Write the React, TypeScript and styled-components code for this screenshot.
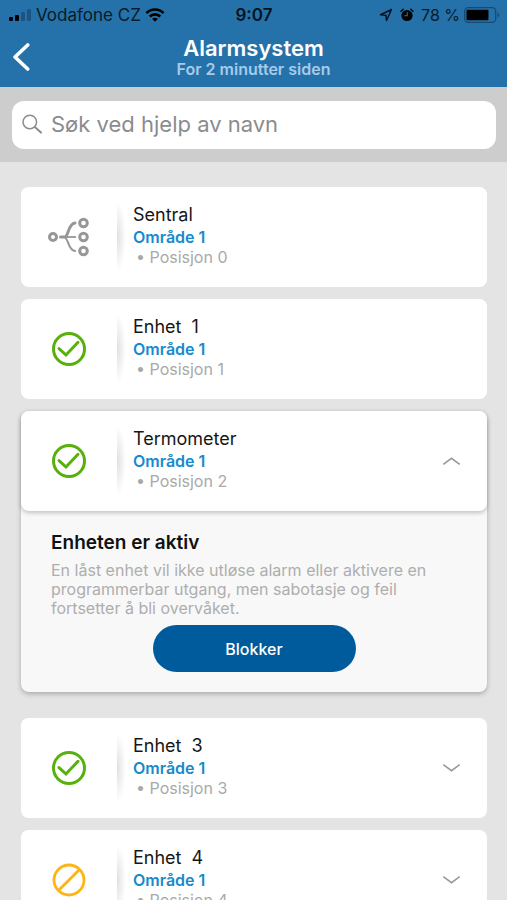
import React, { useState } from "react";
import styled, { createGlobalStyle } from "styled-components";

const GlobalStyle = createGlobalStyle`
  * { box-sizing: border-box; }
  body { margin: 0; background: #e4e4e4; font-family: Inter, "Liberation Sans", sans-serif; }
  button, input { font-family: inherit; }
  h1, h2, p, ul { margin: 0; padding: 0; }
`;

const Screen = styled.div`
  display: flex;
  flex-direction: column;
  height: 100vh;
  background: #e4e4e4;
`;

const Header = styled.header`
  flex: none;
  background: #2572aa;
`;

const StatusBar = styled.div`
  display: grid;
  grid-template-columns: 1fr auto 1fr;
  align-items: center;
  height: 30px;
  padding: 0 7px 0 8px;
  font-size: 17px;
  color: #0a1a28;
`;

const StatusGroup = styled.div<{ $end?: boolean }>`
  display: flex;
  align-items: center;
  justify-content: ${(p) => (p.$end ? "flex-end" : "flex-start")};
  gap: ${(p) => (p.$end ? "7px" : "4px")};
  white-space: nowrap;
`;

const BatteryLevel = styled.span`
  display: flex;
  align-items: center;
  gap: 4px;
  font-size: 16px;
`;

const Clock = styled.time`
  font-weight: 600;
  color: #06121d;
`;

const NavBar = styled.div`
  display: grid;
  grid-template-columns: 48px 1fr 48px;
  align-items: center;
  padding: 6px 0 9px;
`;

const BackButton = styled.button`
  display: flex;
  align-items: center;
  height: 42px;
  padding: 0 0 0 12px;
  border: 0;
  background: none;
  color: #fff;
`;

const Title = styled.h1`
  font-size: 22px;
  line-height: 24px;
  font-weight: 600;
  text-align: center;
  color: #fff;
`;

const Subtitle = styled.p`
  font-size: 16px;
  line-height: 18px;
  font-weight: 600;
  text-align: center;
  color: #a5cbea;
`;

const SearchArea = styled.div`
  flex: none;
  padding: 14px 11px 13px 12px;
  background: #cdcdcd;
`;

const SearchBox = styled.label`
  display: flex;
  align-items: center;
  gap: 8px;
  height: 48px;
  padding: 0 10px 2px;
  border-radius: 12px;
  background: #fff;
  color: #8b8b8e;
`;

const SearchInput = styled.input`
  flex: 1;
  min-width: 0;
  padding: 0;
  border: 0;
  outline: 0;
  background: none;
  font-size: 22px;
  color: #222;
  &::placeholder { color: #8b8b8e; opacity: 1; }
`;

const List = styled.ul`
  flex: 1;
  min-height: 0;
  display: flex;
  flex-direction: column;
  gap: 12px;
  padding: 25px 20px 12px 21px;
  overflow-y: auto;
  scrollbar-width: none;
  list-style: none;
`;

const Item = styled.li<{ $open: boolean }>`
  flex: none;
  margin-bottom: ${(p) => (p.$open ? "14px" : "0")};
  border-radius: 8px;
  background: #f8f8f8;
  box-shadow: ${(p) => (p.$open ? "0 2px 5px rgba(0, 0, 0, 0.25)" : "none")};
`;

const Row = styled.button<{ $open: boolean }>`
  display: grid;
  grid-template-columns: 96px 16px 1fr auto;
  align-items: center;
  width: 100%;
  height: 100px;
  padding: 0 26px 0 0;
  border: 0;
  border-radius: 8px;
  background: #fff;
  text-align: left;
  box-shadow: ${(p) => (p.$open ? "0 2px 4px rgba(0, 0, 0, 0.22)" : "none")};
`;

const IconCell = styled.span`
  display: flex;
  justify-content: center;
`;

const Divider = styled.span`
  height: 68px;
  background: radial-gradient(ellipse 9px 36px at left center, rgba(0, 0, 0, 0.12), rgba(0, 0, 0, 0));
`;

const Info = styled.span`
  display: flex;
  flex-direction: column;
  padding-bottom: 4px;
`;

const Name = styled.span`
  font-size: 18px;
  line-height: 24px;
  color: #161616;
  white-space: pre;
`;

const Area = styled.span`
  font-size: 16px;
  line-height: 20px;
  font-weight: 600;
  color: #168acb;
`;

const Position = styled.span`
  padding-left: 3px;
  font-size: 16px;
  line-height: 20px;
  color: #a9a9a9;
`;

const Panel = styled.div`
  display: flex;
  flex-direction: column;
  padding: 20px 30px;
`;

const PanelTitle = styled.h2`
  font-size: 19px;
  line-height: 24px;
  font-weight: 600;
  color: #111;
`;

const PanelText = styled.p`
  padding: 6px 0 7px;
  font-size: 16px;
  line-height: 19px;
  color: #aeaeae;
`;

const BlockButton = styled.button`
  align-self: center;
  width: 50%;
  min-width: 203px;
  height: 47px;
  border: 0;
  border-radius: 24px;
  background: #005b9c;
  font-size: 16px;
  font-weight: 500;
  color: #fff;
`;

const SignalIcon = () => (
  <svg width="24" height="12" viewBox="0 0 24 12" aria-hidden="true">
    <rect x="1" y="8" width="4" height="4" rx="1" fill="#000" />
    <rect x="7" y="6" width="4" height="6" rx="1" fill="#000" />
    <rect x="13" y="3" width="4" height="9" rx="1" fill="#1b5482" />
    <rect x="19" y="0" width="4" height="12" rx="1" fill="#1b5482" />
  </svg>
);

const WifiIcon = () => (
  <svg width="20" height="14" viewBox="0 0 20 14" fill="none" stroke="#000" strokeWidth="2.6" aria-hidden="true">
    <path d="M1.4 5.2C6.2.3 13.8.3 18.6 5.2" />
    <path d="M4.7 8.5C7.7 5.6 12.3 5.6 15.3 8.5" />
    <path d="M10 13.800L7.100 10.800C8.700 9.400 11.300 9.400 12.900 10.800Z" fill="#000" stroke="none" />
  </svg>
);

const LocationIcon = () => (
  <svg width="14" height="14" viewBox="0 0 14 14" fill="none" stroke="#06121d" strokeWidth="1.5" strokeLinejoin="round" aria-hidden="true">
    <path d="M12.500 1.500L1.500 6.700L7 7.200L7.500 12.500Z" />
  </svg>
);

const AlarmIcon = () => (
  <svg width="14" height="14" viewBox="0 0 14 14" fill="none" strokeLinecap="round" aria-hidden="true">
    <circle cx="7" cy="7.5" r="5.6" fill="#000" />
    <path d="M1 3.200L3.200 1.200M13 3.200L10.800 1.200" stroke="#000" strokeWidth="1.4" />
    <path d="M7.200 4.600V7.800H4.800" stroke="#2572aa" strokeWidth="1.1" />
  </svg>
);

const BatteryIcon = () => (
  <svg width="36" height="16" viewBox="0 0 36 16" aria-hidden="true">
    <rect x="0.7" y="0.7" width="31" height="14.6" rx="3.5" fill="none" stroke="#174a70" strokeWidth="1.3" />
    <rect x="2.5" y="2.8" width="22" height="10.4" rx="1" fill="#000" />
    <path d="M33.500 5.500C35.800 6 35.800 10 33.500 10.500Z" fill="#174a70" />
  </svg>
);

const BackIcon = () => (
  <svg width="18" height="30" viewBox="0 0 18 30" fill="none" stroke="currentColor" strokeWidth="3.6" strokeLinecap="round" strokeLinejoin="round" aria-hidden="true">
    <path d="M15.700 3L3 15L15.700 27" />
  </svg>
);

const SearchIcon = () => (
  <svg width="21" height="20" viewBox="0 0 21 20" fill="none" stroke="currentColor" strokeWidth="1.5" strokeLinecap="round" aria-hidden="true">
    <circle cx="7.8" cy="8" r="6.8" />
    <path d="M12.800 13L19 18.600" strokeWidth="2" />
  </svg>
);

const HubIcon = () => (
  <svg width="42" height="40" viewBox="0 0 42 40" fill="none" stroke="#979797" strokeWidth="3" aria-hidden="true">
    <circle cx="5" cy="20" r="3.5" />
    <circle cx="35.5" cy="6" r="3.8" />
    <circle cx="35.5" cy="20" r="3.8" />
    <circle cx="35.5" cy="34" r="3.8" />
    <path d="M12.500 20H17C21 18 20 7 27 6" strokeWidth="3" strokeLinecap="round" />
    <path d="M14 20H28" strokeWidth="1.8" />
    <path d="M17 20.500C21 23 20 33 27 34" strokeWidth="2" strokeLinecap="round" />
  </svg>
);

const ActiveIcon = () => (
  <svg width="36" height="36" viewBox="0 0 36 36" fill="none" stroke="#57b00c" strokeWidth="3" aria-hidden="true">
    <circle cx="18" cy="18" r="15.5" />
    <path d="M8 17.600L15 24L27 11.300" strokeLinecap="round" />
  </svg>
);

const BlockedIcon = () => (
  <svg width="36" height="36" viewBox="0 0 36 36" fill="none" stroke="#fdb515" strokeWidth="2.8" aria-hidden="true">
    <circle cx="18" cy="18" r="15" />
    <path d="M7.500 28.500L28.500 7.500" />
  </svg>
);

const Caret = ({ up }: { up: boolean }) => (
  <svg width="19" height="10" viewBox="0 0 19 10" fill="none" stroke="#999" strokeWidth="1.6" aria-hidden="true">
    <path d={up ? "M1.300 8.300L9.500 2.300L17.700 8.300" : "M1.300 1.700L9.500 7.700L17.700 1.700"} />
  </svg>
);

type Device = { name: string; position: number; status: "hub" | "active" | "blocked"; expandable?: boolean };

const devices: Device[] = [
  { name: "Sentral", position: 0, status: "hub" },
  { name: "Enhet  1", position: 1, status: "active" },
  { name: "Termometer", position: 2, status: "active", expandable: true },
  { name: "Enhet  3", position: 3, status: "active", expandable: true },
  { name: "Enhet  4", position: 4, status: "blocked", expandable: true },
];

const statusIcons = { hub: HubIcon, active: ActiveIcon, blocked: BlockedIcon };

export default function App() {
  const [openPosition, setOpenPosition] = useState<number | null>(2);
  const [query, setQuery] = useState("");
  const visible = devices.filter((d) => d.name.toLowerCase().includes(query.toLowerCase()));

  return (
    <Screen>
      <GlobalStyle />
      <Header>
        <StatusBar>
          <StatusGroup>
            <SignalIcon />
            <span>Vodafone CZ</span>
            <WifiIcon />
          </StatusGroup>
          <Clock>9:07</Clock>
          <StatusGroup $end>
            <LocationIcon />
            <AlarmIcon />
            <BatteryLevel>
              78 %
              <BatteryIcon />
            </BatteryLevel>
          </StatusGroup>
        </StatusBar>
        <NavBar>
          <BackButton aria-label="Tilbake">
            <BackIcon />
          </BackButton>
          <div>
            <Title>Alarmsystem</Title>
            <Subtitle>For 2 minutter siden</Subtitle>
          </div>
        </NavBar>
      </Header>
      <SearchArea>
        <SearchBox>
          <SearchIcon />
          <SearchInput
            type="text"
            aria-label="Søk ved hjelp av navn"
            placeholder="Søk ved hjelp av navn"
            value={query}
            onChange={(e) => setQuery(e.target.value)}
          />
        </SearchBox>
      </SearchArea>
      <List>
        {visible.map((d) => {
          const open = Boolean(d.expandable) && openPosition === d.position;
          const StatusIcon = statusIcons[d.status];
          return (
            <Item key={d.position} $open={open}>
              <Row
                $open={open}
                aria-expanded={d.expandable ? open : undefined}
                onClick={() => d.expandable && setOpenPosition(open ? null : d.position)}
              >
                <IconCell>
                  <StatusIcon />
                </IconCell>
                <Divider />
                <Info>
                  <Name>{d.name}</Name>
                  <Area>Område 1</Area>
                  <Position>• Posisjon {d.position}</Position>
                </Info>
                {d.expandable && <Caret up={open} />}
              </Row>
              {open && (
                <Panel>
                  <PanelTitle>Enheten er aktiv</PanelTitle>
                  <PanelText>
                    En låst enhet vil ikke utløse alarm eller aktivere en programmerbar utgang, men sabotasje og feil
                    fortsetter å bli overvåket.
                  </PanelText>
                  <BlockButton>Blokker</BlockButton>
                </Panel>
              )}
            </Item>
          );
        })}
      </List>
    </Screen>
  );
}
